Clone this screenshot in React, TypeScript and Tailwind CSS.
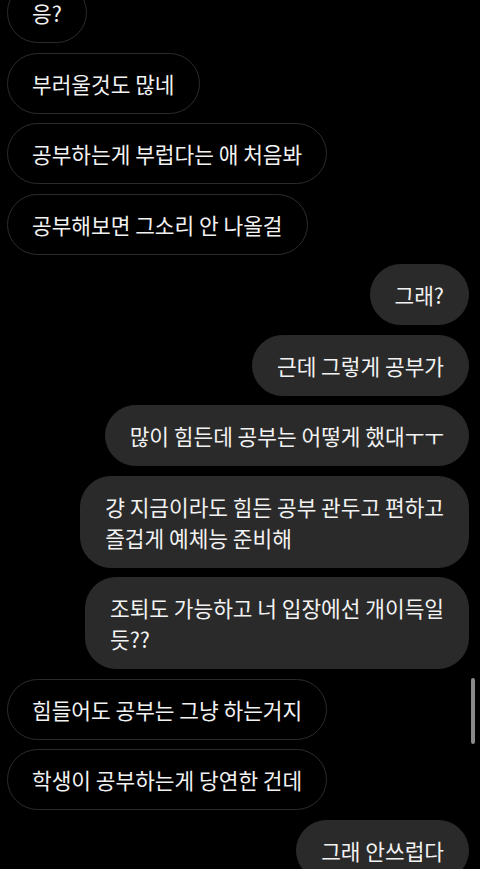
import React from 'react'

type Msg = { text: string; mine?: boolean }

const messages: Msg[] = [
  { text: '응?' },
  { text: '부러울것도 많네' },
  { text: '공부하는게 부럽다는 애 처음봐' },
  { text: '공부해보면 그소리 안 나올걸' },
  { text: '그래?', mine: true },
  { text: '근데 그렇게 공부가', mine: true },
  { text: '많이 힘든데 공부는 어떻게 했대ㅜㅜ', mine: true },
  { text: '걍 지금이라도 힘든 공부 관두고 편하고\n즐겁게 예체능 준비해', mine: true },
  { text: '조퇴도 가능하고 너 입장에선 개이득일\n듯??', mine: true },
  { text: '힘들어도 공부는 그냥 하는거지' },
  { text: '학생이 공부하는게 당연한 건데' },
  { text: '그래 안쓰럽다', mine: true },
]

function Bubble({ msg }: { msg: Msg }) {
  return (
    <div className={msg.mine ? 'flex justify-end pr-[11px]' : 'flex justify-start pl-[7px]'}>
      <div
        className={
          'whitespace-pre-line rounded-[31px] px-6 py-[14px] text-[21.4px] leading-[31px] text-[#f2f2f2] ' +
          (msg.mine ? 'bg-[#2a2a2a] border border-[#2a2a2a]' : 'bg-black border border-[#2c2c2c]')
        }
      >
        {msg.text}
      </div>
    </div>
  )
}

export default function App() {
  return (
    <div
      className="relative w-[480px] h-[869px] overflow-hidden bg-black"
      style={{ fontFamily: '"Noto Sans CJK KR", "Noto Sans", sans-serif' }}
    >
      <div className="-mt-[18px] flex flex-col gap-[9.5px]">
        {messages.map((m, i) => (
          <Bubble key={i} msg={m} />
        ))}
      </div>

      {/* scroll thumb */}
      <div className="absolute left-[471px] top-[678px] h-[66px] w-[4px] rounded-full bg-[#8a8a8a]" />
    </div>
  )
}
